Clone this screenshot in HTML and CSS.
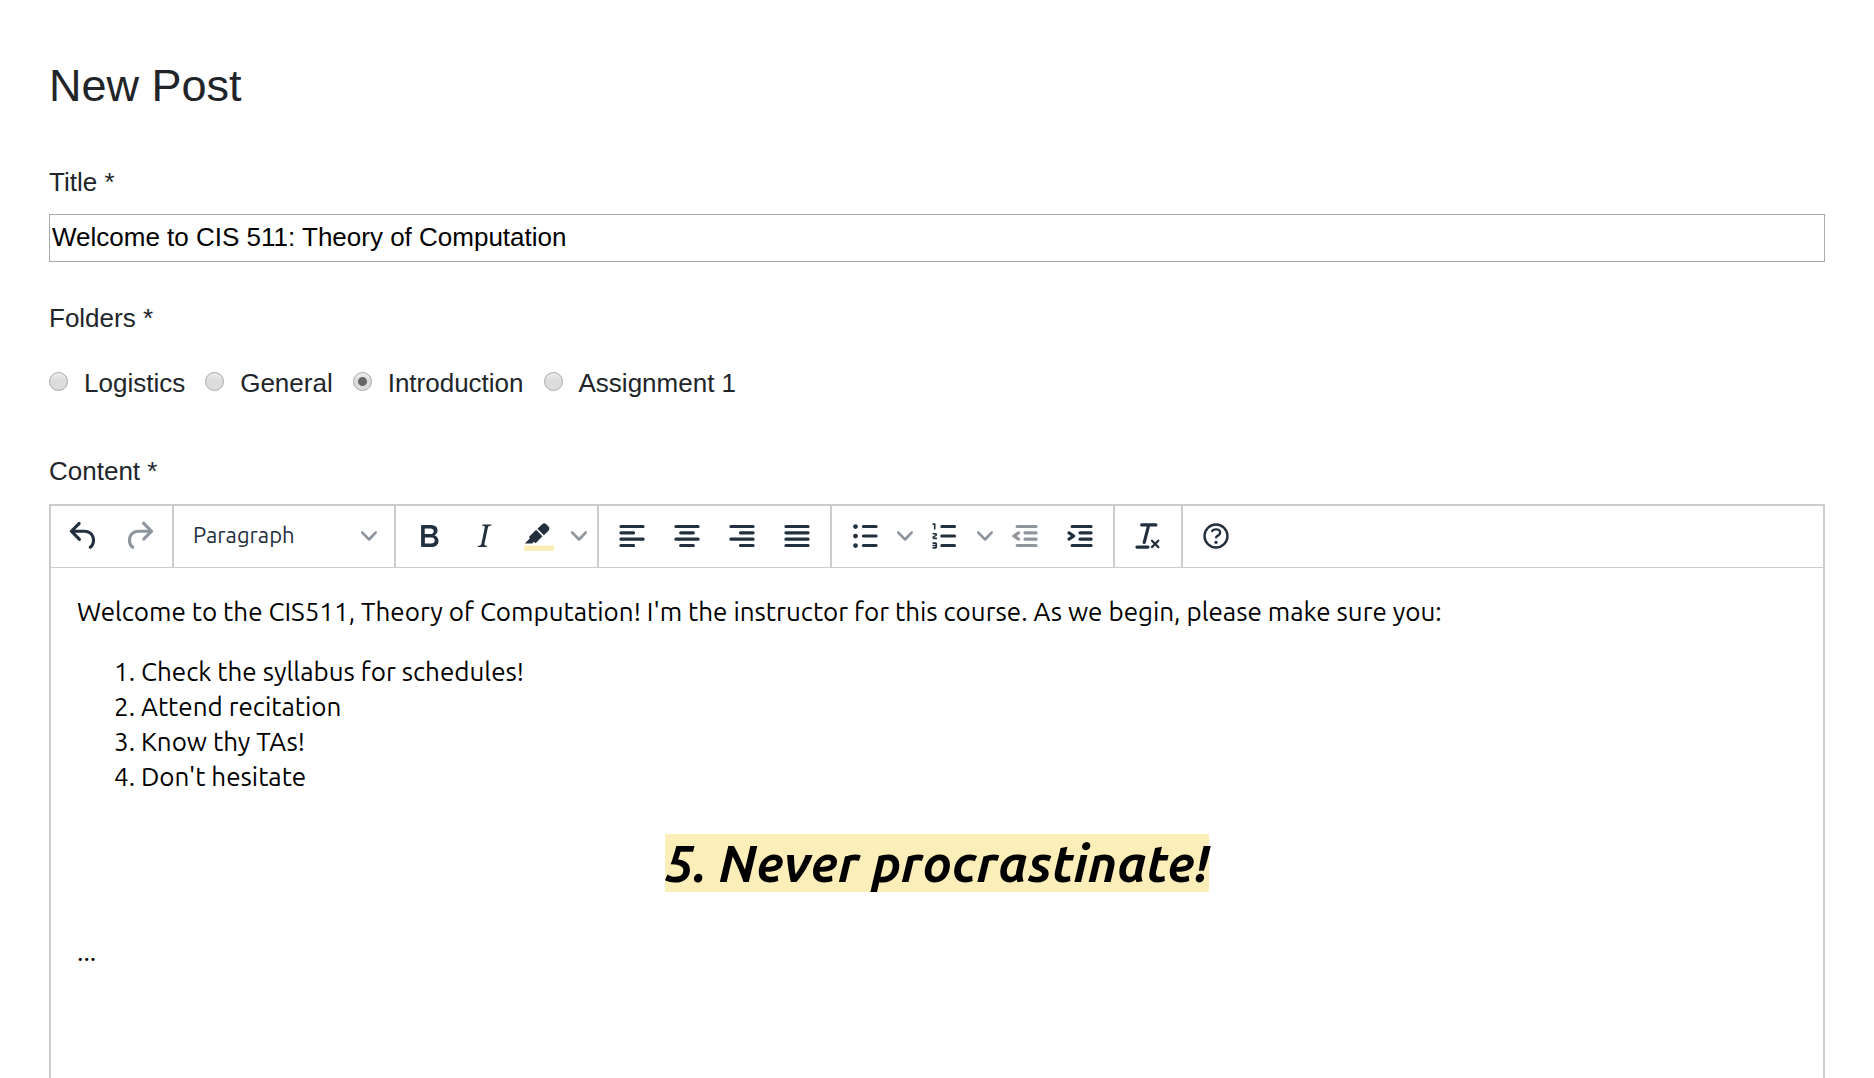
FILE: index.html
```html
<!DOCTYPE html>
<html lang="en">
<head>
<meta charset="utf-8">
<title>New Post</title>
<link rel="stylesheet" href="styles.css">
</head>
<body>
<svg class="sprite" aria-hidden="true">
  <symbol id="chevron" viewBox="0 0 10 10"><path d="M8.7 2.2c.3-.3.8-.3 1 0 .4.4.4.9 0 1.2L5.7 7.8c-.3.3-.9.3-1.2 0L.2 3.4a.8.8 0 010-1.2c.3-.3.8-.3 1.1 0L5 6l3.7-3.8z"/></symbol>
</svg>
<form class="post">
  <h1 class="post-heading">New Post</h1>

  <label class="label" for="title">Title *</label>
  <input class="title-input" id="title" type="text" value="Welcome to CIS 511: Theory of Computation">

  <fieldset class="folders">
    <legend class="label">Folders *</legend>
    <div class="folder-list">
      <label class="folder"><input class="radio" type="radio" name="folder">Logistics</label>
      <label class="folder"><input class="radio" type="radio" name="folder">General</label>
      <label class="folder"><input class="radio" type="radio" name="folder" checked>Introduction</label>
      <label class="folder"><input class="radio" type="radio" name="folder">Assignment 1</label>
    </div>
  </fieldset>

  <div class="label" id="content-label">Content *</div>
  <div class="editor">
    <div class="toolbar" role="toolbar" aria-label="Formatting">
      <div class="group">
        <button class="tool" type="button" aria-label="Undo"><svg class="icon" viewBox="0 0 24 24"><path d="M6.4 8H12c3.7 0 6.2 2 6.8 5.1.6 2.7-.4 5.6-2.3 6.8a1 1 0 01-1-1.8c1.1-.6 1.8-2.7 1.4-4.6-.5-2.1-2.1-3.5-4.9-3.5H6.4l3.3 3.3a1 1 0 11-1.4 1.4l-5-5a1 1 0 010-1.4l5-5a1 1 0 011.4 1.4L6.4 8z"/></svg></button>
        <button class="tool" type="button" aria-label="Redo" disabled><svg class="icon" viewBox="0 0 24 24"><path d="M17.6 10H12c-2.8 0-4.4 1.4-4.9 3.5-.4 2 .3 4 1.4 4.6a1 1 0 11-1 1.8c-2-1.2-2.9-4.1-2.3-6.8.6-3 3-5.1 6.8-5.1h5.6l-3.3-3.3a1 1 0 111.4-1.4l5 5a1 1 0 010 1.4l-5 5a1 1 0 01-1.4-1.4l3.3-3.3z"/></svg></button>
      </div>
      <div class="group">
        <div class="format">
          <select class="format-select" aria-label="Block format"><option>Paragraph</option></select>
          <svg class="chevron"><use href="#chevron"/></svg>
        </div>
      </div>
      <div class="group">
        <button class="tool" type="button" aria-label="Bold"><svg class="icon" viewBox="0 0 24 24"><path d="M7.8 19c-.3 0-.5 0-.6-.2l-.2-.5V5.7c0-.2 0-.4.2-.5l.6-.2h5c1.5 0 2.7.3 3.5 1 .7.6 1.1 1.4 1.1 2.5a3 3 0 01-.6 1.9c-.4.6-1 1-1.6 1.2.4.1.9.3 1.3.6s.8.7 1 1.2c.4.4.5 1 .5 1.6 0 1.3-.4 2.3-1.3 3-.8.7-2.1 1-3.8 1H7.8zm5-8.3c.6 0 1.2-.1 1.6-.5.4-.3.6-.7.6-1.3 0-1.1-.8-1.7-2.3-1.7H9.3v3.5h3.4zm.5 6c.7 0 1.3-.1 1.7-.4.4-.4.6-.9.6-1.5s-.2-1-.7-1.4c-.4-.3-1-.4-2-.4H9.4v3.8h4z" fill-rule="evenodd"/></svg></button>
        <button class="tool" type="button" aria-label="Italic"><svg class="icon" viewBox="0 0 24 24"><path d="M16.7 4.7l-.1.9h-.3c-.6 0-1 0-1.4.3-.3.3-.4.6-.5 1.1l-2.1 9.8v.6c0 .5.4.8 1.4.8h.2l-.2.8H8l.2-.8h.2c1.1 0 1.8-.5 2-1.5l2-9.8.1-.5c0-.6-.4-.8-1.4-.8h-.3l.2-.9h5.8z"/></svg></button>
        <button class="tool" type="button" aria-label="Highlight"><svg class="icon" viewBox="0 0 24 24"><path class="swatch" d="M2.500 18h19v3.500h-19z"/><path d="M7.7 16.7H3l3.3-3.3-.7-.8L10.2 8l4 4.1-4 4.2c-.2.2-.6.2-.8 0l-.6-.7-1.1 1.1zm5-7.5L11 7.4l3-2.9a2 2 0 012.6 0L18 6c.7.7.7 2 0 2.7l-2.9 2.9-1.8-1.8-.5-.6"/></svg></button>
        <button class="arrow" type="button" aria-label="Highlight colours"><svg class="chevron"><use href="#chevron"/></svg></button>
      </div>
      <div class="group">
        <button class="tool" type="button" aria-label="Align left"><svg class="icon bars" viewBox="0 0 24 24"><path d="M5 6h14M5 10h8M5 14h14M5 18h8"/></svg></button>
        <button class="tool" type="button" aria-label="Align center"><svg class="icon bars" viewBox="0 0 24 24"><path d="M5 6h14M8 10h8M5 14h14M8 18h8"/></svg></button>
        <button class="tool" type="button" aria-label="Align right"><svg class="icon bars" viewBox="0 0 24 24"><path d="M5 6h14M11 10h8M5 14h14M11 18h8"/></svg></button>
        <button class="tool" type="button" aria-label="Justify"><svg class="icon bars" viewBox="0 0 24 24"><path d="M5 6h14M5 10h14M5 14h14M5 18h14"/></svg></button>
      </div>
      <div class="group">
        <button class="tool" type="button" aria-label="Bullet list"><svg class="icon" viewBox="0 0 24 24"><path class="bars" d="M11 6h8M11 12h8M11 18h8"/><circle cx="6" cy="6" r="1.5"/><circle cx="6" cy="12" r="1.5"/><circle cx="6" cy="18" r="1.5"/></svg></button>
        <button class="arrow" type="button" aria-label="Bullet styles"><svg class="chevron"><use href="#chevron"/></svg></button>
        <button class="tool" type="button" aria-label="Numbered list"><svg class="icon" viewBox="0 0 24 24"><path class="bars" d="M10 6h8M10 12h8M10 18h8"/><path d="M6 4v3.5c0 .3-.2.5-.5.5a.5.5 0 01-.5-.5V5h-.5a.5.5 0 010-1H6zm-1 8.8l.2.2h1.3c.3 0 .5.2.5.5s-.2.5-.5.5H4.9a1 1 0 01-.9-1V13c0-.4.3-.8.6-1l1.2-.4.2-.3a.2.2 0 00-.2-.2H4.5a.5.5 0 01-.5-.5c0-.3.2-.5.5-.5h1.6c.5 0 .9.4.9 1v.1c0 .4-.3.8-.6 1l-1.2.4-.2.3zM7 17v2c0 .6-.4 1-1 1H4.5a.5.5 0 010-1h1.2c.2 0 .3-.1.3-.3 0-.2-.1-.3-.3-.3H4.4a.4.4 0 110-.8h1.3c.2 0 .3-.1.3-.3 0-.2-.1-.3-.3-.3H4.5a.5.5 0 110-1H6c.6 0 1 .4 1 1z"/></svg></button>
        <button class="arrow" type="button" aria-label="Number styles"><svg class="chevron"><use href="#chevron"/></svg></button>
        <button class="tool" type="button" aria-label="Outdent" disabled><svg class="icon" viewBox="0 0 24 24"><path class="bars" d="M7 6h12M12 10h7M12 14h7M7 18h12"/><path d="M8.600 13.200a1 1 0 01-1.200 1.600l-3-2a1 1 0 010-1.600l3-2a1 1 0 011.200 1.600L6.800 12l1.800 1.200z"/></svg></button>
        <button class="tool" type="button" aria-label="Indent"><svg class="icon" viewBox="0 0 24 24"><path class="bars" d="M7 6h12M12 10h7M12 14h7M7 18h12"/><path d="M4.400 13.200L6.200 12l-1.800-1.200a1 1 0 011.200-1.600l3 2a1 1 0 010 1.600l-3 2a1 1 0 11-1.200-1.600z"/></svg></button>
      </div>
      <div class="group">
        <button class="tool" type="button" aria-label="Clear formatting"><svg class="icon" viewBox="0 0 24 24"><path d="M13.2 6a1 1 0 010 .2l-2.6 10a1 1 0 01-1 .8h-.2a.8.8 0 01-.8-1l2.600-10H8a1 1 0 110-2h9a1 1 0 010 2h-3.800zM5 18h7a1 1 0 010 2H5a1 1 0 010-2zm13 1.500L16.500 18 15 19.500a.7.7 0 01-1-1l1.500-1.500-1.500-1.500a.7.7 0 011-1l1.500 1.500 1.500-1.500a.7.7 0 011 1L17.500 17l1.500 1.500a.7.7 0 01-1 1z"/></svg></button>
      </div>
      <div class="group">
        <button class="tool" type="button" aria-label="Help"><svg class="icon" viewBox="0 0 24 24"><circle class="ring" cx="12" cy="12" r="7.250"/><path d="M9.600 9.700a.7.7 0 01-.7-.8c0-1.100 1.500-1.800 3.200-1.800 1.800 0 3.200.8 3.200 2.400 0 1.400-.4 2.100-1.500 2.800-.2 0-.3.1-.3.2a2 2 0 00-.8.8.8.8 0 01-1.400-.6c.3-.7.8-1 1.300-1.500l.4-.2c.7-.4.8-.6.8-1.500 0-.5-.6-.9-1.700-.9-.5 0-1 .1-1.400.3-.2 0-.3.1-.3.2v-.2c0 .4-.4.8-.8.8z"/><circle cx="12" cy="16" r="1"/></svg></button>
      </div>
    </div>
    <div class="document" contenteditable="true" spellcheck="false" role="textbox" aria-multiline="true" aria-labelledby="content-label">
      <p>Welcome to the CIS511, Theory of Computation! I'm the instructor for this course. As we begin, please make sure you:</p>
      <ol>
        <li>Check the syllabus for schedules!</li>
        <li>Attend recitation</li>
        <li>Know thy TAs!</li>
        <li>Don't hesitate</li>
      </ol>
      <h2><em class="highlight">5. Never procrastinate!</em></h2>
      <p>...</p>
    </div>
  </div>
</form>
</body>
</html>
```
FILE: styles.css
```css
* {
  box-sizing: border-box;
}

body {
  margin: 0;
  background: #fff;
  color: #212529;
  font: 26px/38px "Liberation Sans", Arial, sans-serif;
}

.sprite {
  display: none;
}

.post {
  display: flex;
  flex-direction: column;
  min-height: 100vh;
  padding: 59px 49px 0;
}

.post-heading {
  margin: 0 0 50px;
  font-size: 45px;
  font-weight: 400;
  line-height: 54px;
}

.label {
  display: block;
  padding: 0;
}

.title-input {
  width: 100%;
  height: 48px;
  margin: 13px 0 37px;
  padding: 0 2px 2px;
  border: 1px solid #a9a9a9;
  background: #fff;
  color: #000;
  font: inherit;
}

.folders {
  min-width: 0;
  margin: 0 0 50px;
  padding: 0;
  border: 0;
}

.folder-list {
  display: flex;
  flex-wrap: wrap;
  gap: 20px;
  padding-top: 27px;
}

.folder {
  display: flex;
  align-items: flex-start;
  gap: 16px;
}

.radio {
  appearance: none;
  width: 19px;
  height: 19px;
  margin: 8px 0 0;
  border: 1px solid #a8a8a8;
  border-radius: 50%;
  background: linear-gradient(#ececec, #dcdcdc 45%);
}

.radio:checked {
  background: radial-gradient(circle, #666 4px, transparent 5px), linear-gradient(#ececec, #dcdcdc 45%);
}

.editor {
  display: flex;
  flex: 1;
  flex-direction: column;
  margin-top: 14px;
  border: 2px solid #ccc;
  border-bottom: 0;
}

.toolbar {
  display: flex;
  flex-wrap: wrap;
  border-bottom: 1px solid #ccc;
}

.group {
  display: flex;
  align-items: center;
  gap: 1px;
  height: 61px;
  padding: 0 6px 2px;
  border-right: 2px solid #ccc;
}

.group:last-child {
  border-right: 0;
}

.tool,
.arrow {
  display: flex;
  align-items: center;
  justify-content: center;
  width: 54px;
  height: 54px;
  padding: 0;
  border: 0;
  background: none;
  color: #222f3e;
}

.arrow {
  width: 24px;
}

.tool:disabled {
  opacity: 0.5;
}

.icon {
  width: 38px;
  height: 38px;
  fill: currentColor;
}

.bars {
  fill: none;
  stroke: currentColor;
  stroke-linecap: round;
  stroke-width: 2;
}

.ring {
  fill: none;
  stroke: currentColor;
  stroke-width: 1.5;
}

.swatch {
  fill: #fbeeb8;
}

.chevron {
  width: 16px;
  height: 16px;
  fill: #222f3e;
  opacity: 0.5;
}

.format {
  display: grid;
  align-items: center;
  width: 208px;
}

.format > * {
  grid-area: 1 / 1;
}

.format-select {
  appearance: none;
  width: 100%;
  height: 54px;
  padding: 0 40px 2px 13px;
  border: 0;
  background: none;
  color: #222f3e;
  font: 22px "Ubuntu", "Noto Sans", sans-serif;
}

.format .chevron {
  justify-self: end;
  margin-right: 11px;
  pointer-events: none;
}

.document {
  flex: 1;
  padding: 26px;
  color: #000;
  font: 26px/35px "Ubuntu", "Noto Sans", sans-serif;
  outline: 0;
}

.document p {
  margin: 0;
}

.document ol {
  margin: 25px 0 40px;
  padding-left: 64px;
}

.document h2 {
  display: flex;
  justify-content: center;
  margin: 0 0 42px;
  font-size: 51px;
  line-height: 58px;
}

.highlight {
  background: #fbeeb8;
}
```
